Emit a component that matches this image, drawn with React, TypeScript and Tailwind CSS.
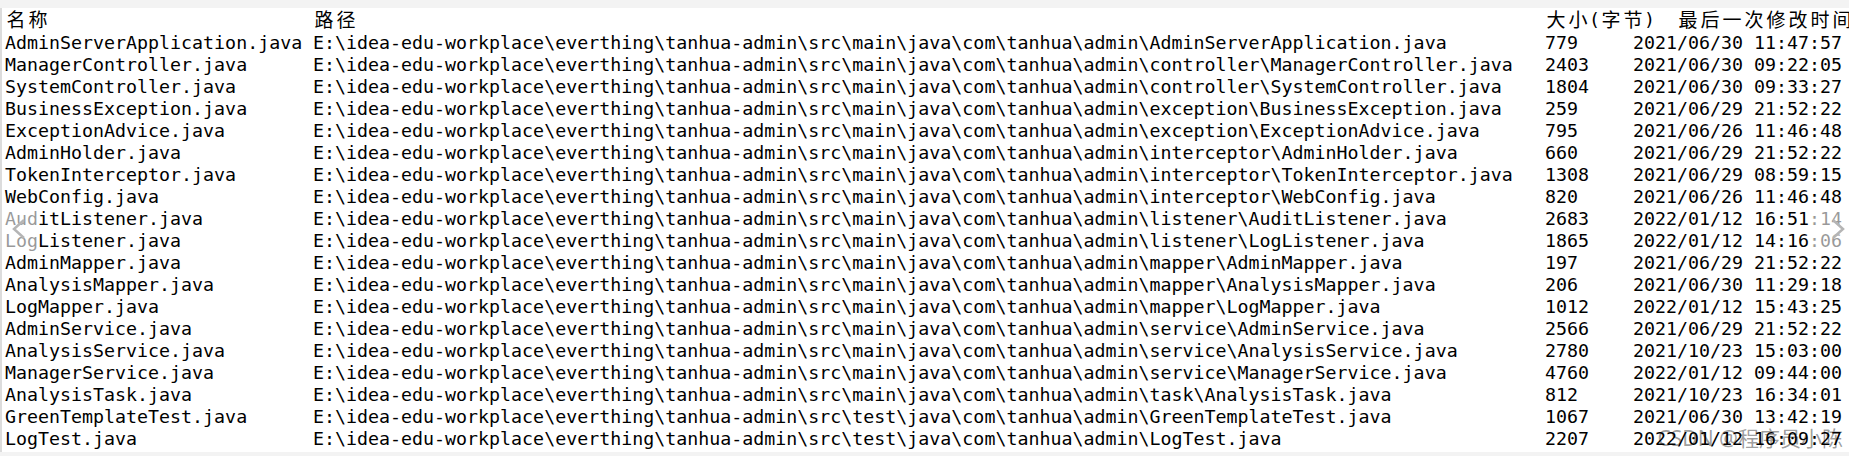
import React from "react";

const base = "E:\\idea-edu-workplace\\everthing\\tanhua-admin\\src\\";
const main = base + "main\\java\\com\\tanhua\\admin\\";
const test = base + "test\\java\\com\\tanhua\\admin\\";

const files = [
  { name: "AdminServerApplication.java", path: main + "AdminServerApplication.java", size: "779", time: "2021/06/30 11:47:57" },
  { name: "ManagerController.java", path: main + "controller\\ManagerController.java", size: "2403", time: "2021/06/30 09:22:05" },
  { name: "SystemController.java", path: main + "controller\\SystemController.java", size: "1804", time: "2021/06/30 09:33:27" },
  { name: "BusinessException.java", path: main + "exception\\BusinessException.java", size: "259", time: "2021/06/29 21:52:22" },
  { name: "ExceptionAdvice.java", path: main + "exception\\ExceptionAdvice.java", size: "795", time: "2021/06/26 11:46:48" },
  { name: "AdminHolder.java", path: main + "interceptor\\AdminHolder.java", size: "660", time: "2021/06/29 21:52:22" },
  { name: "TokenInterceptor.java", path: main + "interceptor\\TokenInterceptor.java", size: "1308", time: "2021/06/29 08:59:15" },
  { name: "WebConfig.java", path: main + "interceptor\\WebConfig.java", size: "820", time: "2021/06/26 11:46:48" },
  { name: "AuditListener.java", path: main + "listener\\AuditListener.java", size: "2683", time: "2022/01/12 16:51:14" },
  { name: "LogListener.java", path: main + "listener\\LogListener.java", size: "1865", time: "2022/01/12 14:16:06" },
  { name: "AdminMapper.java", path: main + "mapper\\AdminMapper.java", size: "197", time: "2021/06/29 21:52:22" },
  { name: "AnalysisMapper.java", path: main + "mapper\\AnalysisMapper.java", size: "206", time: "2021/06/30 11:29:18" },
  { name: "LogMapper.java", path: main + "mapper\\LogMapper.java", size: "1012", time: "2022/01/12 15:43:25" },
  { name: "AdminService.java", path: main + "service\\AdminService.java", size: "2566", time: "2021/06/29 21:52:22" },
  { name: "AnalysisService.java", path: main + "service\\AnalysisService.java", size: "2780", time: "2021/10/23 15:03:00" },
  { name: "ManagerService.java", path: main + "service\\ManagerService.java", size: "4760", time: "2022/01/12 09:44:00" },
  { name: "AnalysisTask.java", path: main + "task\\AnalysisTask.java", size: "812", time: "2021/10/23 16:34:01" },
  { name: "GreenTemplateTest.java", path: test + "GreenTemplateTest.java", size: "1067", time: "2021/06/30 13:42:19" },
  { name: "LogTest.java", path: test + "LogTest.java", size: "2207", time: "2022/01/12 16:09:27" },
];

// header text sits on the same 11px cell grid: CJK takes two cells
function Cells({ text }: { text: string }) {
  return (
    <span className="inline-flex">
      {Array.from(text).map((ch, i) =>
        ch.charCodeAt(0) > 255 ? (
          <span key={i} className="inline-block w-[22px] text-center text-[19px]">{ch}</span>
        ) : (
          <span key={i} className="inline-block w-[11px] text-center">{ch === " " ? "\u00a0" : ch}</span>
        )
      )}
    </span>
  );
}

const cols = "grid grid-cols-[308px_1232px_88px_1fr] whitespace-pre";

export default function App() {
  return (
    <div className="w-[1849px] h-[456px] bg-[#f3f3f3] pt-2 pb-1 overflow-hidden">
      <div
        className="relative h-[444px] bg-white border-l-2 border-[#dcdcdc] pl-[3px] text-black text-[18.3px] leading-[22px] overflow-hidden"
        style={{ fontFamily: '"DejaVu Sans Mono", "Noto Sans CJK SC", monospace' }}
      >
        <div className={cols + " pt-px"}>
          <Cells text="名称" />
          <Cells text="路径" />
          <div className="col-span-2">
            <Cells text="大小(字节)  最后一次修改时间" />
          </div>
        </div>
        {files.map((f) => (
          <div key={f.name} className={cols}>
            <div>{f.name}</div>
            <div>{f.path}</div>
            <div>{f.size}</div>
            <div>{f.time}</div>
          </div>
        ))}

        {/* carousel arrows */}
        <div className="absolute left-[-2px] top-[199px] w-[38px] h-[44px] bg-white/60 rounded-r flex items-center justify-center">
          <svg width="16" height="22" viewBox="0 0 16 22" fill="none" stroke="#b5b5b5" strokeWidth="2.5">
            <path d="M13 2 L3 11 L13 20" />
          </svg>
        </div>
        <div className="absolute right-0 top-[199px] w-[36px] h-[44px] bg-white/60 rounded-l flex items-center justify-end pr-1">
          <svg width="14" height="22" viewBox="0 0 14 22" fill="none" stroke="#b5b5b5" strokeWidth="2.5">
            <path d="M2 2 L12 11 L2 20" />
          </svg>
        </div>

        {/* watermark */}
        <div
          className="absolute right-[6px] bottom-[3px] text-[21px] leading-[22px] text-black/40"
          style={{ fontFamily: '"Noto Sans", "Noto Sans CJK SC", sans-serif' }}
        >
          CSDN @程序员小陈
        </div>
      </div>
    </div>
  );
}
